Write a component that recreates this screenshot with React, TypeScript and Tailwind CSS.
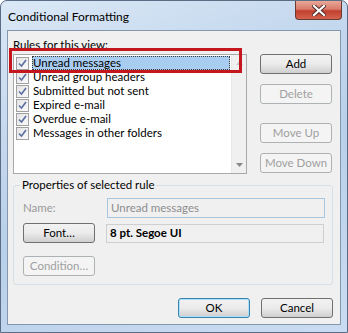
import React from "react";

const font = { fontFamily: 'Lato, "Liberation Sans", Arial, sans-serif' };

function Check() {
  return (
    <div className="w-[13px] h-[13px] border border-[#a0a0a0] bg-gradient-to-br from-[#e4e4e4] to-[#fafafa] flex items-center justify-center shrink-0">
      <svg width="9" height="9" viewBox="0 0 9 9">
        <path d="M1 4.5 L3.5 7 L8 1" fill="none" stroke="#5a6fa0" strokeWidth="1.6" />
      </svg>
    </div>
  );
}

function Btn({
  children,
  disabled,
  def,
  className = "",
}: {
  children: React.ReactNode;
  disabled?: boolean;
  def?: boolean;
  className?: string;
}) {
  if (disabled)
    return (
      <div
        className={`w-[72px] h-[20px] rounded-[3px] border border-[#adb2b5] bg-[#f4f4f4] text-[#a0a0a0] text-[11.5px] flex items-center justify-center ${className}`}
      >
        {children}
      </div>
    );
  return (
    <div
      className={`w-[72px] h-[20px] rounded-[3px] border ${
        def ? "border-[#3c7fb1] shadow-[inset_0_0_0_1px_#a8e4f8]" : "border-[#707070]"
      } bg-gradient-to-b from-[#f2f2f2] via-[#ebebeb] to-[#cfcfcf] text-black text-[11.5px] flex items-center justify-center ${className}`}
    >
      {children}
    </div>
  );
}

export default function App() {
  const rows = [
    "Unread messages",
    "Unread group headers",
    "Submitted but not sent",
    "Expired e-mail",
    "Overdue e-mail",
    "Messages in other folders",
  ];
  return (
    <div className="w-[348px] h-[333px] overflow-hidden" style={font}>
      <div className="relative w-[348px] h-[333px] rounded-t-[7px] border border-[#5a6d85] bg-[linear-gradient(160deg,#dbe8f6_0%,#c4d8ee_30%,#b9d0ea_55%,#c9dcf1_100%)] flex flex-col">
        {/* title bar */}
        <div className="h-[29px] flex items-start shrink-0">
          <div className="pl-[7px] pt-[7px] text-[12px] text-black">Conditional Formatting</div>
          <div className="ml-auto mr-[5px] w-[47px] h-[19px] rounded-b-[4px] border border-t-0 border-[#6b3a33] bg-[linear-gradient(#e9a89a_0%,#d97b6a_45%,#c1402e_55%,#d4624d_100%)] flex items-center justify-center">
            <svg width="14" height="11" viewBox="0 0 14 11">
              <path d="M2 1 L12 10 M12 1 L2 10" stroke="#4a2a26" strokeWidth="4" strokeLinecap="square" />
              <path d="M2 1 L12 10 M12 1 L2 10" stroke="#ffffff" strokeWidth="2.2" strokeLinecap="square" />
            </svg>
          </div>
        </div>
        {/* client */}
        <div className="mx-[6px] mb-[7px] flex-1 border border-[#8597ad] bg-[#f0f0f0] flex flex-col relative">
          <div className="flex">
            <div className="flex flex-col pl-[5px]">
              <div className="h-[22px] pt-[6px] text-[11.5px] leading-[15px] text-black">Rules for this view:</div>
              <div className="mt-[1px] w-[234px] h-[120px] border border-[#a9a9a9] bg-white flex">
                <div className="flex-1 flex flex-col pt-[1px] pl-[2px]">
                  {rows.map((r, i) => (
                    <div key={r} className="h-[14px] flex items-center gap-[3px]">
                      <Check />
                      <div
                        className={`h-[14px] leading-[13px] text-[11.5px] text-black pl-[1px] ${
                          i === 0 ? "w-[198px] bg-[#a9cdf1] outline-1 outline-dotted outline-[#3a3a3a] -outline-offset-1" : ""
                        }`}
                      >
                        {r}
                      </div>
                    </div>
                  ))}
                </div>
                <div className="w-[15px] bg-[#f0f0f0] border-l border-[#e8e8e8] flex flex-col items-center justify-between py-[6px]">
                  <svg width="7" height="4" viewBox="0 0 7 4"><path d="M0 4 L3.5 0 L7 4Z" fill="#c8c8c8" /></svg>
                  <svg width="7" height="4" viewBox="0 0 7 4"><path d="M0 0 L3.5 4 L7 0Z" fill="#8a8a8a" /></svg>
                </div>
              </div>
            </div>
            <div className="ml-[13px] pt-[23px] flex flex-col">
              <Btn>Add</Btn>
              <Btn disabled className="mt-[10px]">Delete</Btn>
              <Btn disabled className="mt-[19px]">Move Up</Btn>
              <Btn disabled className="mt-[10px]">Move Down</Btn>
            </div>
          </div>
          {/* group box */}
          <div className="relative ml-[5px] mt-[11px] w-[320px] h-[100px] border border-[#d5dfe5] rounded-[3px]">
            <div className="absolute left-[6px] -top-[9px] px-[2px] bg-[#f0f0f0] text-[11.5px] leading-[15px] text-black">
              Properties of selected rule
            </div>
            <div className="flex flex-col pl-[9px] pt-[12px]">
              <div className="flex items-center h-[20px]">
                <div className="w-[84px] text-[11.5px] text-[#9a9a9a]">Name:</div>
                <div className="w-[218px] h-[20px] border border-[#a9c6dc] bg-[#f0f0f0] text-[11.5px] text-[#8d8d8d] pl-[3px] flex items-center">
                  Unread messages
                </div>
              </div>
              <div className="flex items-center mt-[5px] h-[20px]">
                <Btn>Font…</Btn>
                <div className="ml-[11px] w-[218px] h-[19px] border border-[#cfcfcf] bg-[#f0f0f0] text-[11.5px] font-bold text-black pl-[3px] flex items-center">
                  8 pt. Segoe UI
                </div>
              </div>
              <Btn disabled className="mt-[13px]">Condition…</Btn>
            </div>
          </div>
          <div className="flex justify-end gap-[11px] pr-[7px] mt-[13px]">
            <Btn def>OK</Btn>
            <Btn>Cancel</Btn>
          </div>
          {/* annotation box */}
          <div className="absolute left-[1px] top-[17px] w-[233px] h-[25px] border-[3px] border-[#c4161c] pointer-events-none" />
        </div>
      </div>
    </div>
  );
}
